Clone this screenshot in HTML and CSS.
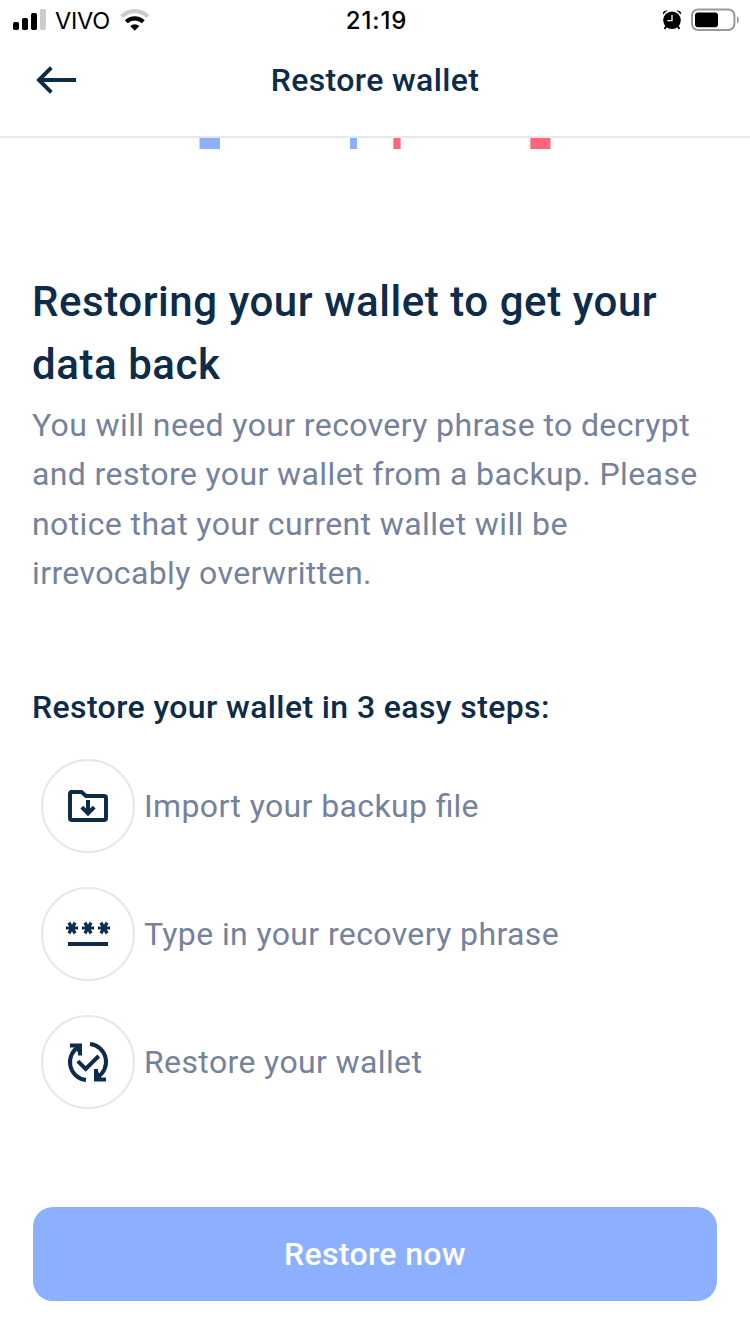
FILE: index.html
```html
<!DOCTYPE html>
<html lang="en">
<head>
<meta charset="utf-8">
<title>Restore wallet</title>
<link rel="stylesheet" href="styles.css">
</head>
<body>
<div class="status">
  <div class="carrier">
    <svg width="34" height="22" viewBox="0 0 34 22"><rect x="0" y="13" width="6" height="8" rx="1.7"/><rect x="9" y="9" width="6" height="12" rx="1.7"/><rect x="18" y="4" width="6" height="17" rx="1.7"/><rect x="27" y="0" width="6" height="21" rx="1.7" fill="#ccc"/></svg>
    <span class="network">VIVO</span>
    <svg class="wifi" width="30" height="22" viewBox="0 0 30 22"><path d="M1.7 7.6A18.5 18.5 0 0 1 27.9 7.6" fill="none" stroke="#ccc" stroke-width="4.2"/><path d="M6.3 12.8A12.5 12.5 0 0 1 23.3 12.8" fill="none" stroke="#000" stroke-width="4.2"/><path d="M10.2 17Q14.8 13.6 19.4 17L14.8 21.8Z"/></svg>
  </div>
  <div class="time">21:19</div>
  <div class="power">
    <svg width="20" height="22" viewBox="0 0 20 22"><circle cx="10" cy="11.3" r="8.8"/><path d="M1 5.4Q0 1.5 5.8 1.2ZM19 5.4Q20 1.5 14.2 1.2Z"/><path d="M4.5 17L2.5 19.9M15.5 17L17.5 19.9" stroke="#000" stroke-width="2"/><path d="M10 5.8V11.7H5.4" fill="none" stroke="#fff" stroke-width="1.3"/></svg>
    <svg width="49" height="24" viewBox="0 0 49 24"><rect x="1" y="1.5" width="42.4" height="20.5" rx="6" fill="none" stroke="#999" stroke-width="2"/><rect x="4" y="4.5" width="23" height="14.8" rx="3"/><path d="M46 8Q48 9.5 48 11.7T46 15.5Z" fill="#999"/></svg>
  </div>
</div>
<header class="header">
  <svg class="back" width="42" height="30" viewBox="0 0 42 30"><path d="M41 15H4M16.3 2.7L4 15L16.3 27.3" fill="none" stroke="#0d2c4b" stroke-width="4"/></svg>
  <div class="title">Restore wallet</div>
</header>
<main class="content">
  <svg class="art" width="750" height="11" viewBox="0 0 750 11"><path fill="#8cafff" d="M199.5 0H220V11H199.5ZM350 0H357V11H350Z"/><path fill="#ff667c" d="M393.4 0H400.6V11H393.4ZM530.3 0H550.5V11H530.3Z"/></svg>
  <h1 class="headline">Restoring your wallet to get your<br>data back</h1>
  <p class="intro">You will need your recovery phrase to decrypt<br>and restore your wallet from a backup. Please<br>notice that your current wallet will be<br>irrevocably overwritten.</p>
  <h2 class="subhead">Restore your wallet in 3 easy steps:</h2>
  <ul class="steps">
    <li class="step"><span class="icon"><svg width="48" height="48" viewBox="0 0 48 48"><path d="M6 10H17.5L22 14H40Q42 14 42 16V36Q42 38 40 38H8Q6 38 6 36V12Q6 10 8 10Z" fill="none" stroke="#0d2c4b" stroke-width="4"/><path d="M24 18V31M17.8 25.2L24 31.4L30.2 25.2" fill="none" stroke="#0d2c4b" stroke-width="4"/></svg></span><span class="label">Import your backup <span class="liga">fi</span>le</span></li>
    <li class="step"><span class="icon"><svg width="48" height="48" viewBox="0 0 48 48"><g fill="none" stroke="#0d2c4b" stroke-width="3.2"><path id="star" d="M2 18H14M4.9 12.6L11.1 23.4M11.1 12.6L4.9 23.4"/><use href="#star" x="16"/><use href="#star" x="32"/></g><path d="M4 32H44V36H4Z" fill="#0d2c4b"/></svg></span><span class="label">Type in your recovery phrase</span></li>
    <li class="step"><span class="icon"><svg width="48" height="48" viewBox="0 0 48 48"><g fill="none" stroke="#0d2c4b" stroke-width="4"><path d="M22 42A18 18 0 0 1 15 8.5M26 6A18 18 0 0 1 33 39.5"/><path d="M6 7.5H16V17.5M42 41.5H32V31" /><path d="M13.8 23.2L21.7 31L34.7 18"/></g><path d="M10 7H18V13L14 15ZM38 42H30V35L34 33Z" fill="#0d2c4b"/></svg></span><span class="label">Restore your wallet</span></li>
  </ul>
  <button class="action">Restore now</button>
</main>
</body>
</html>
```
FILE: styles.css
```css
* { box-sizing: border-box; }
body { margin: 0; width: 750px; height: 1334px; overflow: hidden; background: #fff; color: #0d2c4b; font-family: Roboto, sans-serif; }
svg { display: block; flex: none; }
.status { height: 40px; padding: 0 10px 0 13px; display: grid; grid-template-columns: 1fr auto 1fr; align-items: center; color: #000; }
.carrier { display: flex; align-items: center; }
.network { margin-left: 8px; padding-top: 2px; font: 400 23.5px/38px Inter, sans-serif; letter-spacing: -.2px; }
.wifi { margin-left: 10px; }
.time { padding-top: 2px; font: 500 24px/38px Inter, sans-serif; letter-spacing: .9px; }
.power { display: flex; justify-content: flex-end; align-items: center; gap: 9px; }
.header { height: 98px; padding: 0 35px 16px; border-bottom: 2px solid #e6e8ec; display: grid; grid-template-columns: 42px 1fr 42px; align-items: center; }
.title { text-align: center; font-size: 32px; font-weight: 500; line-height: 48px; letter-spacing: .36px; }
.content { padding: 0 32px; }
.art { margin-left: -32px; }
.headline { margin: 121px 0 0; font-size: 42px; font-weight: 500; line-height: 63px; letter-spacing: .56px; white-space: nowrap; }
.intro { margin: 4.6px 0 0; font-size: 32px; line-height: 49.5px; letter-spacing: .385px; color: #74829d; white-space: nowrap; }
.subhead { margin: 84.4px 0 0; font-size: 32px; font-weight: 500; line-height: 48px; letter-spacing: .39px; }
.steps { margin: 28px 0 0; padding: 0 9px; list-style: none; display: flex; flex-direction: column; gap: 34px; }
.step { height: 94px; display: flex; align-items: center; gap: 9px; }
.icon { width: 94px; height: 94px; border: 2px solid #e5e8eb; border-radius: 50%; display: flex; align-items: center; justify-content: center; }
.label { font-size: 32px; line-height: 48px; letter-spacing: .38px; color: #74829d; white-space: nowrap; }
.liga { letter-spacing: 0; }
.action { display: block; width: 684px; height: 94px; margin: 98px 0 0 1px; padding: 0; border: 0; border-radius: 20px; background: #8cafff; color: #fff; font: 500 32px/48px Roboto, sans-serif; letter-spacing: .36px; }
```
